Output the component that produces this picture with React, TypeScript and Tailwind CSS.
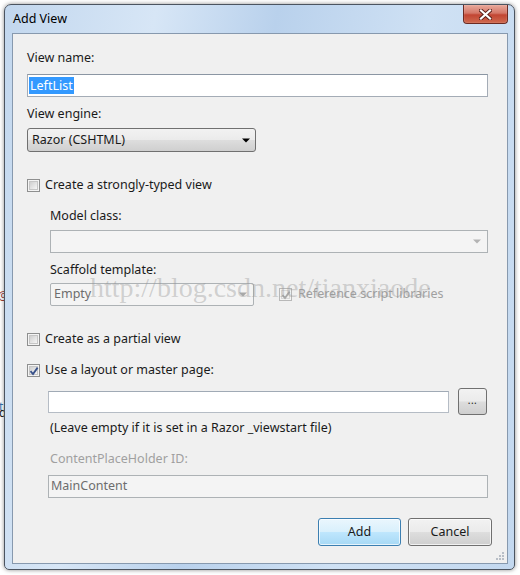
import React from "react";

const font = "font-['Segoe_UI','Noto_Sans',sans-serif]";

function Arrow({ color = "#000" }: { color?: string }) {
  return (
    <svg width="8" height="5" viewBox="0 0 8 5">
      <path d="M0 0.5 H8 L4 4.5 Z" fill={color} />
    </svg>
  );
}

function CheckBox({ checked = false, disabled = false }: { checked?: boolean; disabled?: boolean }) {
  return (
    <span
      className={`relative inline-flex h-[13px] w-[13px] shrink-0 items-center justify-center border ${
        disabled ? "border-[#b8b8b8]" : "border-[#8e8f8f]"
      } bg-[#f4f4f4]`}
    >
      <span
        className={`h-[9px] w-[9px] border ${
          disabled ? "border-[#d8d8d8] bg-[#f0f0f0]" : "border-[#c6c6c6] bg-gradient-to-br from-[#cfcfcf] to-[#f6f6f6]"
        }`}
      />
      {checked && (
        <svg className="absolute left-[1px] top-[1px]" width="10" height="10" viewBox="0 0 10 10">
          <path
            d="M1.5 5.2 L4 8 L8.6 1.6"
            fill="none"
            stroke={disabled ? "#a9a9a9" : "#38518a"}
            strokeWidth="1.8"
          />
        </svg>
      )}
    </span>
  );
}

function CheckRow({ label, checked }: { label: string; checked?: boolean }) {
  return (
    <div className="flex h-[16px] items-center gap-[5px]">
      <CheckBox checked={checked} />
      <span>{label}</span>
    </div>
  );
}

const grayBtn =
  "bg-[linear-gradient(to_bottom,#f2f2f2_0%,#ebebeb_48%,#dddddd_52%,#cfcfcf_100%)] border border-[#707070] rounded-[3px]";

export default function App() {
  return (
    <div className={`relative h-[575px] w-[520px] overflow-hidden bg-white pl-[4px] pt-[4px] text-[12.5px] text-[#1a1a1a] ${font}`}>
      {/* bits of the window behind the dialog */}
      <span className="absolute left-[-2px] top-[287px] text-[12px] text-[#a0403a]">@</span>
      <span className="absolute left-[-1px] top-[398px] text-[12px] text-[#3a6fa8]">t</span>
      <span className="absolute left-[-1px] top-[404px] text-[12px] text-[#222]">d</span>

      <div className="relative flex h-[566px] w-[511px] flex-col rounded-t-[7px] rounded-b-[5px] border border-[#4b5460] bg-[linear-gradient(100deg,#c2d7ee_0%,#d7e6f6_25%,#b9d1ec_45%,#cfe1f4_70%,#c3d8ef_100%)] shadow-[0_0_4px_rgba(0,0,0,0.45)]">
        {/* title bar */}
        <div className="flex h-[28px] shrink-0 items-start">
          <span className="mt-[5px] pl-[8px] text-[12.5px] text-black">Add View</span>
          <div className="ml-auto mr-[6px] flex h-[19px] w-[45px] items-center justify-center rounded-b-[4px] border border-t-0 border-[#6b2a22] bg-[linear-gradient(to_bottom,#e9a99b_0%,#d47768_45%,#c24533_55%,#cf6a4f_100%)] shadow-[inset_0_0_1px_rgba(255,255,255,0.8)]">
            <svg width="13" height="11" viewBox="0 0 13 11">
              <path d="M2 1.5 L11 9.5 M11 1.5 L2 9.5" stroke="#5a1f18" strokeWidth="4" strokeLinecap="square" />
              <path d="M2 1.5 L11 9.5 M11 1.5 L2 9.5" stroke="#ffffff" strokeWidth="2.2" strokeLinecap="square" />
            </svg>
          </div>
        </div>

        {/* client area */}
        <div className="relative mb-[5px] ml-[7px] mr-[6px] flex flex-1 flex-col border border-[#8799ae] bg-[#f0f0f0] pl-[14px] pr-[15px] pt-[16px]">
          <div className="h-[16px] leading-[16px]">View name:</div>
          <div className="mr-[4px] mt-[8px] flex h-[23px] items-center border border-[#a4acb6] border-t-[#8b96a3] bg-white pl-[1px]">
            <span className="bg-[#3399ff] px-[1px] leading-[17px] text-white">LeftList</span>
          </div>

          <div className="mt-[9px] h-[16px] leading-[16px]">View engine:</div>
          <div className={`mt-[6px] flex h-[24px] w-[229px] items-center justify-between pl-[4px] pr-[5px] ${grayBtn}`}>
            <span>Razor (CSHTML)</span>
            <Arrow />
          </div>

          <div className="mt-[25px]">
            <CheckRow label="Create a strongly-typed view" />
          </div>

          <div className="pl-[23px]">
            <div className="mt-[15px] h-[16px] leading-[16px]">Model class:</div>
            <div className="mr-[4px] mt-[6px] flex h-[23px] items-center justify-end border border-[#adb2b5] bg-[#f4f4f4] pr-[6px]">
              <Arrow color="#b4b4b4" />
            </div>
            <div className="mt-[9px] h-[16px] leading-[16px]">Scaffold template:</div>
            <div className="mt-[5px] flex items-center">
              <div className="flex h-[23px] w-[204px] items-center justify-between rounded-[2px] border border-[#adb2b5] bg-[#f4f4f4] pl-[3px] pr-[6px] text-[#6d6d6d]">
                <span>Empty</span>
                <Arrow color="#a8a8a8" />
              </div>
              <div className="ml-[25px] flex items-center gap-[6px] text-[#a0a0a0]">
                <CheckBox checked disabled />
                <span>Reference script libraries</span>
              </div>
            </div>
          </div>

          <div className="mt-[25px]">
            <CheckRow label="Create as a partial view" />
          </div>
          <div className="mt-[15px]">
            <CheckRow label="Use a layout or master page:" checked />
          </div>

          <div className="pl-[21px]">
            <div className="mr-[5px] mt-[10px] flex items-center">
              <div className="h-[22px] flex-1 border border-[#b5bcc5] border-t-[#a0aab5] bg-white" />
              <div className={`ml-[9px] flex h-[27px] w-[29px] items-center justify-center pb-[2px] text-[10px] tracking-[0.5px] ${grayBtn} border-[#8a8a8a]`}>
                ...
              </div>
            </div>
            <div className="mt-[5px] h-[16px] pl-[2px] leading-[16px]">(Leave empty if it is set in a Razor _viewstart file)</div>
            <div className="mt-[15px] h-[16px] pl-[2px] leading-[16px] text-[#a0a0a0]">ContentPlaceHolder ID:</div>
            <div className="mr-[4px] mt-[8px] flex h-[23px] items-center border border-[#adb2b5] bg-[#f4f4f4] pl-[2px] text-[#6d6d6d]">
              MainContent
            </div>
          </div>

          <div className="mt-[20px] flex justify-end gap-[7px]">
            <div className="flex h-[28px] w-[83px] items-center justify-center rounded-[3px] border border-[#3c7fb1] bg-[linear-gradient(to_bottom,#eaf6fd_0%,#d9f0fc_48%,#bee6fd_52%,#a7d9f5_100%)] shadow-[inset_0_0_0_1px_rgba(255,255,255,0.7)]">
              Add
            </div>
            <div className={`flex h-[28px] w-[84px] items-center justify-center ${grayBtn} shadow-[inset_0_0_0_1px_rgba(255,255,255,0.7)]`}>
              Cancel
            </div>
          </div>

          {/* resize grip */}
          <svg className="absolute bottom-[2px] right-[2px]" width="10" height="10" viewBox="0 0 10 10">
            <g fill="#b8bec6">
              <rect x="7" y="1" width="2" height="2" />
              <rect x="4" y="4" width="2" height="2" />
              <rect x="7" y="4" width="2" height="2" />
              <rect x="1" y="7" width="2" height="2" />
              <rect x="4" y="7" width="2" height="2" />
              <rect x="7" y="7" width="2" height="2" />
            </g>
          </svg>

          {/* watermark */}
          <span className="pointer-events-none absolute left-[77px] top-[236px] font-['Liberation_Serif',serif] text-[28px] leading-[36px] text-[rgba(150,150,150,0.4)]">
            http://blog.csdn.net/tianxiaode
          </span>
        </div>
      </div>
    </div>
  );
}
